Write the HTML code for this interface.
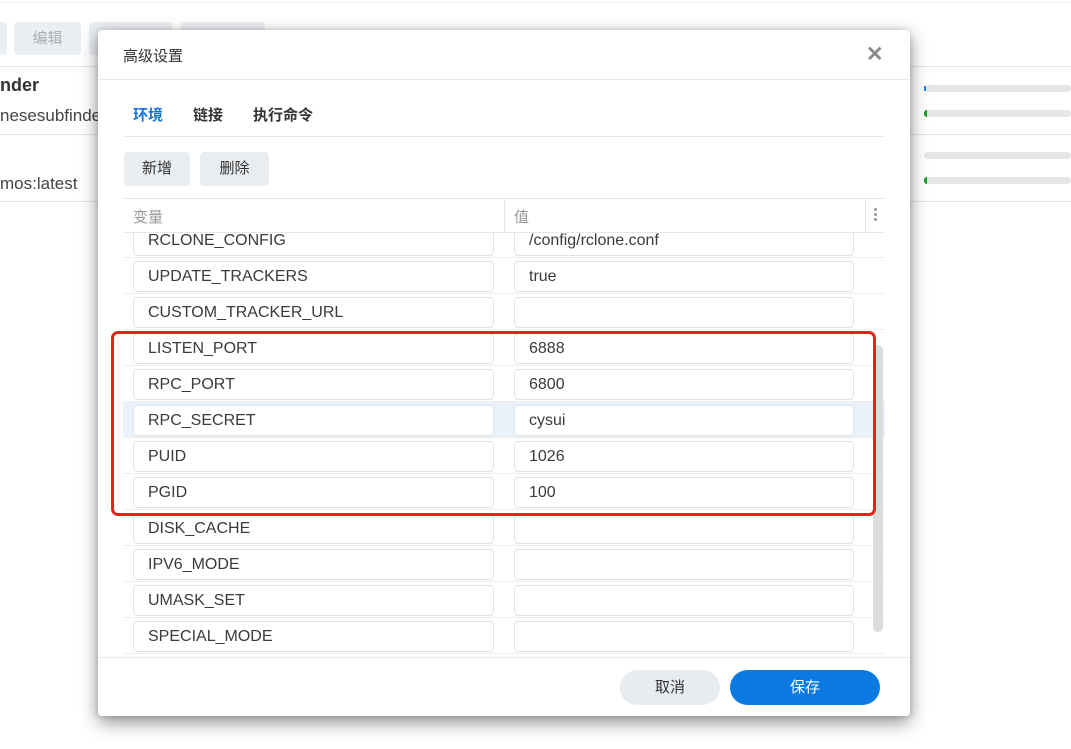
<!DOCTYPE html>
<html><head><meta charset="utf-8"><style>
*{box-sizing:border-box;margin:0;padding:0}
html,body{width:1071px;height:749px;overflow:hidden}
body{background:#fff;position:relative;font-family:"Liberation Sans","Noto Sans CJK SC",sans-serif;color:#333}
.a{position:absolute}
.tb{position:absolute;top:22px;height:33px;background:#eceff2;border-radius:4px;color:#a9adb2;font-size:15px;text-align:center;line-height:33px}
.hl{position:absolute;height:1px;background:#e4e6e8}
.bar{position:absolute;left:924px;width:147px;height:7px;background:#e6e6e6;border-radius:4px}
.dlg{position:absolute;left:98px;top:30px;width:812px;height:686px;background:#fff;border-radius:4px;box-shadow:0 6px 18px rgba(0,0,0,.45),0 0 6px rgba(0,0,0,.15)}
.row{position:absolute;left:123px;width:762px;height:36px;border-bottom:1px solid #eceef0}
.in{position:absolute;top:3px;height:31px;border:1px solid #e1e4e7;border-radius:4px;background:#fff;font-size:16px;line-height:29px;padding-left:14px;color:#3a3a3a}
.k{left:10px;width:361px}.v{left:391px;width:340px}
</style></head><body>
<div class="hl" style="left:0;top:2px;width:1071px;background:#eee"></div>
<div class="tb" style="left:-10px;width:17px"></div>
<div class="tb" style="left:14px;width:67px">编辑</div>
<div class="tb" style="left:89px;width:83px"></div>
<div class="tb" style="left:181px;width:84px"></div>
<div class="hl" style="left:0;top:66px;width:1071px"></div>
<div class="a" style="left:0;top:75px;font-size:18px;font-weight:bold;color:#333">nder</div>
<div class="a" style="left:0;top:106px;font-size:17px;color:#444">nesesubfinde</div>
<div class="hl" style="left:0;top:134px;width:1071px"></div>
<div class="a" style="left:0;top:174px;font-size:17px;color:#444">mos:latest</div>
<div class="hl" style="left:0;top:201px;width:1071px"></div>
<div class="bar" style="top:85px"></div><div class="a" style="left:924px;top:86px;width:2px;height:5px;background:#2a7de1"></div>
<div class="bar" style="top:110px"></div><div class="a" style="left:924px;top:110px;width:3px;height:7px;background:#1a9a2a;border-radius:3px 0 0 3px"></div>
<div class="bar" style="top:152px"></div>
<div class="bar" style="top:177px"></div><div class="a" style="left:924px;top:177px;width:3px;height:7px;background:#1a9a2a;border-radius:3px 0 0 3px"></div>

<div class="dlg"></div>
<div class="a" style="left:123px;top:45px;font-size:15px;color:#333">高级设置</div>
<div class="a" style="left:866px;top:42px;font-size:21px;color:#8a8a8a;font-weight:bold">✕</div>
<div class="hl" style="left:98px;top:79px;width:812px;background:#e8eaec"></div>
<div class="a" style="left:133px;top:104px;font-size:15px;font-weight:bold;color:#1a73d9">环境</div>
<div class="a" style="left:193px;top:104px;font-size:15px;font-weight:bold;color:#333">链接</div>
<div class="a" style="left:253px;top:104px;font-size:15px;font-weight:bold;color:#333">执行命令</div>
<div class="hl" style="left:123px;top:136px;width:762px"></div>
<div class="a" style="left:124px;top:152px;width:66px;height:34px;background:#eaedf0;border-radius:4px;text-align:center;line-height:34px;font-size:15px">新增</div>
<div class="a" style="left:200px;top:152px;width:69px;height:34px;background:#eaedf0;border-radius:4px;text-align:center;line-height:34px;font-size:15px">删除</div>
<div class="hl" style="left:123px;top:198px;width:762px"></div>

<div style="position:absolute;left:0;top:233px;width:1071px;height:424px;overflow:hidden">
<div style="position:absolute;left:0;top:-233px;width:1071px;height:657px">
<div class="row" style="top:222px"><div class="in k">RCLONE_CONFIG</div><div class="in v">/config/rclone.conf</div></div>
<div class="row" style="top:258px"><div class="in k">UPDATE_TRACKERS</div><div class="in v">true</div></div>
<div class="row" style="top:294px"><div class="in k">CUSTOM_TRACKER_URL</div><div class="in v"></div></div>
<div class="row" style="top:330px"><div class="in k">LISTEN_PORT</div><div class="in v">6888</div></div>
<div class="row" style="top:366px"><div class="in k">RPC_PORT</div><div class="in v">6800</div></div>
<div class="row" style="top:402px;background:#e9f1fb"><div class="in k">RPC_SECRET</div><div class="in v">cysui</div></div>
<div class="row" style="top:438px"><div class="in k">PUID</div><div class="in v">1026</div></div>
<div class="row" style="top:474px"><div class="in k">PGID</div><div class="in v">100</div></div>
<div class="row" style="top:510px"><div class="in k">DISK_CACHE</div><div class="in v"></div></div>
<div class="row" style="top:546px"><div class="in k">IPV6_MODE</div><div class="in v"></div></div>
<div class="row" style="top:582px"><div class="in k">UMASK_SET</div><div class="in v"></div></div>
<div class="row" style="top:618px"><div class="in k">SPECIAL_MODE</div><div class="in v"></div></div>
</div></div>
<div class="a" style="left:123px;top:199px;width:762px;height:34px;background:#fff;border-bottom:1px solid #e4e6e8"></div>
<div class="a" style="left:133px;top:206px;font-size:15px;color:#999">变量</div>
<div class="a" style="left:504px;top:199px;width:1px;height:34px;background:#e4e6e8"></div>
<div class="a" style="left:514px;top:206px;font-size:15px;color:#999">值</div>
<div class="a" style="left:865px;top:199px;width:1px;height:34px;background:#e4e6e8"></div>
<div class="a" style="left:874px;top:208px;width:3px;height:3px;background:#999;border-radius:50%;box-shadow:0 5px 0 #999,0 10px 0 #999"></div>
<div class="a" style="left:873px;top:345px;width:10px;height:287px;background:#dcdcdc;border-radius:5px"></div>
<div class="a" style="left:111px;top:331px;width:765px;height:185px;border:3px solid #e8221b;border-radius:7px"></div>
<div class="hl" style="left:98px;top:657px;width:812px;background:#e8eaec"></div>
<div class="a" style="left:620px;top:670px;width:100px;height:35px;background:#e8ebef;border-radius:18px;text-align:center;line-height:35px;font-size:15px">取消</div>
<div class="a" style="left:730px;top:670px;width:150px;height:35px;background:#0a7ae2;border-radius:18px;text-align:center;line-height:35px;font-size:15px;color:#fff">保存</div>
</body></html>
